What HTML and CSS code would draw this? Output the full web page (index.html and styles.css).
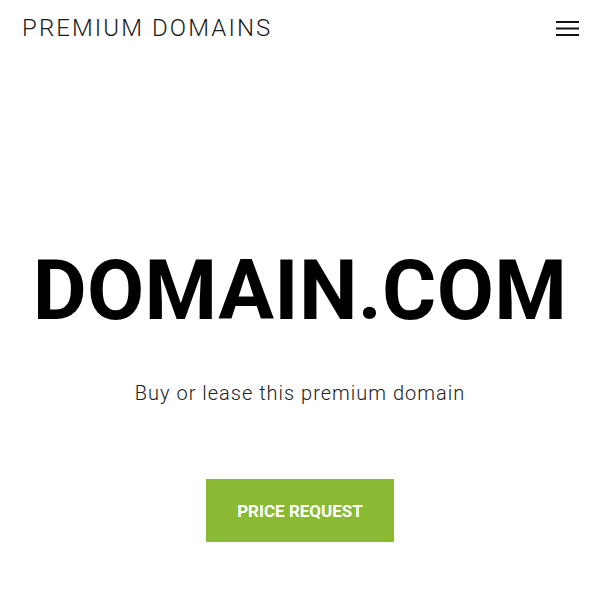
FILE: index.html
```html
<!DOCTYPE html>
<html>
<head>
<meta charset="utf-8">
<link rel="stylesheet" href="styles.css">
</head>
<body>
<header class="topbar">
  <div class="brand">PREMIUM DOMAINS</div>
  <button class="menu" aria-label="Menu">
    <svg width="24" height="16" viewBox="0 0 24 16"><rect x="0" y="1" width="23" height="2" fill="#111"/><rect x="0" y="7.5" width="23" height="2" fill="#111"/><rect x="0" y="14" width="23" height="2" fill="#111"/></svg>
  </button>
</header>
<main class="hero">
  <h1 class="domain">DOMAIN.COM</h1>
  <p class="tagline">Buy or lease this premium domain</p>
  <a class="cta" href="#">PRICE REQUEST</a>
</main>
</body>
</html>
```
FILE: styles.css
```css
html, body { margin: 0; padding: 0; background: #fff; }
body { font-family: Roboto, "Noto Sans", sans-serif; color: #111; }
.topbar {
  display: flex; justify-content: space-between; align-items: center;
  padding: 12px 20px 0 22px; height: 32px;
}
.brand { font-weight: 300; font-size: 24px; letter-spacing: 2.1px; color: #1a1a1a; }
.menu { background: none; border: 0; padding: 0; display: flex; margin-right: 0; }
.hero { display: flex; flex-direction: column; align-items: center; }
.domain {
  margin: 197px 0 0; font-weight: 700; font-size: 83px; line-height: 100px; color: #000;
  letter-spacing: 0.3px;
}
.tagline {
  margin: 40px 0 0; font-weight: 300; font-size: 20px; letter-spacing: 1px; color: #222;
  line-height: 24px;
}
.cta {
  margin-top: 74px; display: flex; align-items: center; justify-content: center;
  width: 188px; height: 63px; background: #8aba33; color: #fff; text-decoration: none;
  font-weight: 700; font-size: 17px;
}
```
